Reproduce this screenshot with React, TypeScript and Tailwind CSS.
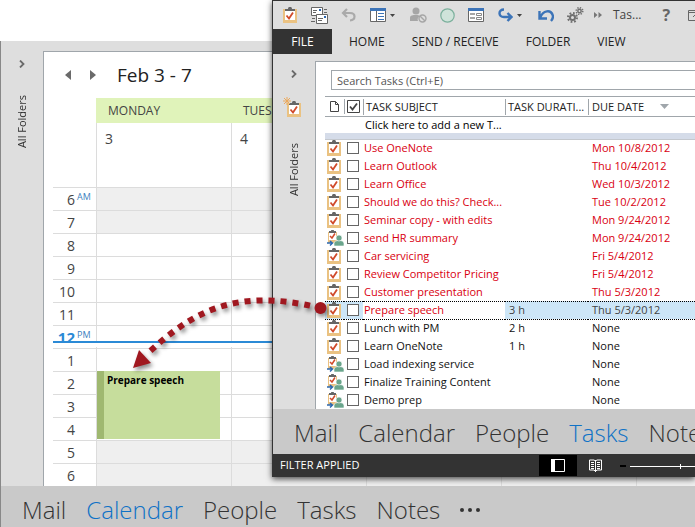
import type { ReactNode } from "react";

type Task = {
  subject: string;
  due: string;
  duration?: string;
  late?: boolean;
  assigned?: boolean;
  selected?: boolean;
};

const tasks: Task[] = [
  { subject: "Use OneNote", due: "Mon 10/8/2012", late: true },
  { subject: "Learn Outlook", due: "Thu 10/4/2012", late: true },
  { subject: "Learn Office", due: "Wed 10/3/2012", late: true },
  { subject: "Should we do this? Check...", due: "Tue 10/2/2012", late: true },
  { subject: "Seminar copy - with edits", due: "Mon 9/24/2012", late: true },
  { subject: "send HR summary", due: "Mon 9/24/2012", late: true, assigned: true },
  { subject: "Car servicing", due: "Fri 5/4/2012", late: true },
  { subject: "Review Competitor Pricing", due: "Fri 5/4/2012", late: true },
  { subject: "Customer presentation", due: "Thu 5/3/2012", late: true },
  { subject: "Prepare speech", due: "Thu 5/3/2012", duration: "3 h", late: true, selected: true },
  { subject: "Lunch with PM", due: "None", duration: "2 h" },
  { subject: "Learn OneNote", due: "None", duration: "1 h" },
  { subject: "Load indexing service", due: "None", assigned: true },
  { subject: "Finalize Training Content", due: "None", assigned: true },
  { subject: "Demo prep", due: "None", assigned: true },
];

const hours = ["6", "7", "8", "9", "10", "11", "12", "1", "2", "3", "4", "5", "6"];
const days = ["MONDAY", "TUESDAY", "WEDNESDAY", "THURSDAY", "FRIDAY"];

function Clipboard() {
  return (
    <svg width="14" height="16" viewBox="0 0 14 16" className="block">
      <path d="M0 2h14v14H0z" fill="#eac282" />
      <path d="M2 2h10v11H2z" fill="#fff" />
      <path d="M2 4V2h3c0-3 4-3 4 0h3v2z" fill="#666" />
      <path d="M3.5 8.5l2.5 3 4-6" fill="none" stroke="#d04a2b" strokeWidth="1.8" />
    </svg>
  );
}

function AssignedClipboard() {
  return (
    <svg width="17" height="16" viewBox="0 0 17 16" className="block">
      <path d="M1 2h9v11H1z" fill="#eac282" />
      <path d="M2 2h7v8H2z" fill="#fff" />
      <path d="M2 3V1h2c0-2 3-2 3 0h2v2z" fill="#666" />
      <path d="M3 6l2 2 3-4.5" fill="none" stroke="#d04a2b" strokeWidth="1.5" />
      <path d="M7 16v-2.500c0-2 2-3 5-3s5 1 5 3V16z" fill="#6aa58c" stroke="#fff" strokeWidth=".6" />
      <circle cx="12" cy="8" r="3" fill="#6aa58c" stroke="#fff" strokeWidth=".6" />
      <path d="M0 13h5M3 11l2.500 2L3 15.500" fill="none" stroke="#2c68b0" strokeWidth="1.4" />
    </svg>
  );
}

function Chevron() {
  return (
    <svg width="6" height="8" viewBox="0 0 6 8">
      <path d="M1 .5L4.500 4 1 7.500" fill="none" stroke="#6a6a6a" strokeWidth="1.8" />
    </svg>
  );
}

function Caret() {
  return (
    <svg width="5" height="3" viewBox="0 0 5 3">
      <path d="M0 0h5L2.500 3z" fill="#444" />
    </svg>
  );
}

function ToolButton({ label, children, menu }: { label: string; children: ReactNode; menu?: boolean }) {
  return (
    <button
      aria-label={label}
      className={menu ? "flex h-5 w-8 shrink-0 items-center gap-1 pl-[3px]" : "flex h-5 w-5 shrink-0 items-center justify-center"}
    >
      {children}
      {menu && <Caret />}
    </button>
  );
}

function QuickAccess() {
  return (
    <div className="flex h-7 items-center gap-[9px] pl-[7px] text-[12px] text-[#444]">
      <ToolButton label="Tasks">
        <Clipboard />
      </ToolButton>
      <ToolButton label="Send/Receive All Folders">
        <svg width="17" height="17" viewBox="0 0 17 17" fill="none" stroke="#666">
          <path d="M.5.500h11v8H.5z" fill="#fff" />
          <path d="M2 3.500h4M2 5.500h3M13 2.500h3M13 5.500h3M1 11.500h3M0 14.500h4" />
          <path d="M8 2h2v2H8z" fill="#2c68b0" stroke="none" />
          <path d="M5.500 7.500h11v9h-11z" fill="#fff" />
          <path d="M7 11.500h5M7 13.500h4" />
          <path d="M13 9h2v2h-2z" fill="#2c68b0" stroke="none" />
        </svg>
      </ToolButton>
      <ToolButton label="Undo">
        <svg width="15" height="14" viewBox="0 0 15 14" fill="none" stroke="#aaa" strokeWidth="2.200">
          <path d="M6 1L2 5l4 4M2 5h7c6 0 6 7 0 7.500" />
        </svg>
      </ToolButton>
      <ToolButton label="Reading pane" menu>
        <svg width="16" height="14" viewBox="0 0 16 14">
          <path d="M.5.500h15v13H.5z" fill="#fff" stroke="#666" />
          <path d="M0 0h16v3H0z" fill="#3c74b8" />
          <path d="M6.500 3v10" stroke="#666" />
          <path d="M8 5.500h6M8 8.500h6M8 11.500h6" stroke="#3c74b8" />
        </svg>
      </ToolButton>
      <ToolButton label="Block sender">
        <svg width="17" height="16" viewBox="0 0 17 16" fill="#a6a6a6">
          <circle cx="6" cy="4" r="3.500" />
          <path d="M0 14v-3c0-3 3-3 6-3 2 0 3 0 4 1-2 1-3 3-2 5z" />
          <circle cx="12.500" cy="11.500" r="3.500" fill="none" stroke="#a6a6a6" strokeWidth="1.400" />
          <path d="M10 9l5 5" stroke="#a6a6a6" strokeWidth="1.400" />
        </svg>
      </ToolButton>
      <ToolButton label="Status">
        <svg width="15" height="15" viewBox="0 0 15 15">
          <circle cx="7.500" cy="7.500" r="6.700" fill="#cfe3da" stroke="#7bb09c" strokeWidth="1.200" />
        </svg>
      </ToolButton>
      <ToolButton label="Form">
        <svg width="16" height="14" viewBox="0 0 16 14">
          <path d="M.5.500h15v13H.5z" fill="#fff" stroke="#666" />
          <path d="M0 0h16v3H0z" fill="#3c74b8" />
          <path d="M2 6h5M2 10h5" stroke="#888" strokeWidth="1.500" />
          <path d="M8.500 5.500h5v2h-5zM8.500 9.500h5v2h-5z" fill="none" stroke="#888" />
        </svg>
      </ToolButton>
      <ToolButton label="Forward" menu>
        <svg width="15" height="14" viewBox="0 0 15 14" fill="none" stroke="#3c74b8" strokeWidth="2.400">
          <path d="M6 1.500C0 1.500 0 9 6 9h7M9.500 5l4 4-4 4" />
        </svg>
      </ToolButton>
      <ToolButton label="Reply">
        <svg width="16" height="13" viewBox="0 0 16 13" fill="none" stroke="#3c74b8" strokeWidth="2.400">
          <path d="M1.500 2v7.500H9M2 9c3-8 11-9 13-2 0 2-1 4-2 5" />
        </svg>
      </ToolButton>
      <ToolButton label="Settings">
        <svg width="17" height="16" viewBox="0 0 17 16" fill="none" stroke="#707070">
          <circle cx="5.500" cy="10.500" r="2.500" strokeWidth="2" />
          <circle cx="5.500" cy="10.500" r="4.500" strokeWidth="2" strokeDasharray="1.760 1.770" />
          <circle cx="12.500" cy="4" r="1.700" strokeWidth="1.500" />
          <circle cx="12.500" cy="4" r="3.300" strokeWidth="1.500" strokeDasharray="1.300 1.290" />
        </svg>
      </ToolButton>
      <svg width="8" height="6" viewBox="0 0 8 6" fill="#777" className="shrink-0">
        <path d="M0 0l3.500 3L0 6zM4.500 0L8 3 4.500 6z" />
      </svg>
      <span className="shrink-0 pl-[2px] text-[12px]">Tas...</span>
      <button className="shrink-0 pl-3 text-[16px] font-bold text-[#666]">?</button>
      <span className="shrink-0 pl-[6px]">
        <ToolButton label="Ribbon display options">
          <svg width="14" height="11" viewBox="0 0 14 11" fill="none" stroke="#666">
            <path d="M.5.500h13v10H.5zM0 2.500h14M5 7l2-2 2 2" />
          </svg>
        </ToolButton>
      </span>
    </div>
  );
}

function Rail({ children }: { children?: ReactNode }) {
  return (
    <aside className="flex w-[42px] shrink-0 flex-col items-center text-[11px] text-[#333]">
      <button aria-label="Expand folder pane" className="mt-2 flex h-[10px] items-center">
        <Chevron />
      </button>
      {children}
      <span className="mt-[26px] rotate-180 whitespace-nowrap [writing-mode:vertical-rl]">All Folders</span>
    </aside>
  );
}

function ModuleNav({ active, className }: { active: string; className: string }) {
  return (
    <nav className={`flex items-center gap-5 overflow-hidden bg-[#c9c9c9] pl-[21px] text-[24px] font-light text-[#333] ${className}`}>
      {["Mail", "Calendar", "People", "Tasks", "Notes"].map((name) => (
        <a key={name} href="#" className={name === active ? "text-[#0f72c6]" : ""}>
          {name}
        </a>
      ))}
      <button aria-label="More" className="flex gap-1">
        <i className="size-1 rounded-full bg-[#333]" />
        <i className="size-1 rounded-full bg-[#333]" />
        <i className="size-1 rounded-full bg-[#333]" />
      </button>
    </nav>
  );
}

function CalendarWindow() {
  return (
    <section className="border-l border-[#888] bg-[#dedede]">
      <div className="flex pt-[10px]">
        <Rail />
        <div className="min-w-0 flex-1 overflow-hidden border-t border-l border-[#a0a6ab] bg-white">
          <header className="flex h-[46px] items-center gap-[19px] pl-[21px]">
            <button aria-label="Previous week">
              <svg width="6" height="10" viewBox="0 0 6 10">
                <path d="M6 0v10L0 5z" fill="#6a6a6a" />
              </svg>
            </button>
            <button aria-label="Next week">
              <svg width="6" height="10" viewBox="0 0 6 10">
                <path d="M0 0v10l6-5z" fill="#6a6a6a" />
              </svg>
            </button>
            <h1 className="pl-[2px] text-[19px] text-[#222]">Feb 3 - 7</h1>
          </header>
          <div className="relative ml-[9px]">
            <div className="flex pl-[43px]">
              {days.map((day, i) => (
                <div key={day} className="w-[135px] shrink-0 text-[#444]">
                  <div className="h-[25px] bg-[#e0f3ba] pl-3 text-[12px] leading-[25px]">{day}</div>
                  <div className="h-16 border-l border-[#dcdcdc] pt-[6px] pl-2 text-[14px] leading-5">{i + 3}</div>
                </div>
              ))}
            </div>
            {hours.map((hour, i) => {
              const off = i < 2 || i > 10;
              const now = i === 6;
              return (
                <div key={i} className="flex h-[23px] border-t border-[#dcdcdc]">
                  <div
                    className={
                      now
                        ? "flex w-[43px] shrink-0 overflow-hidden text-[15px] font-bold text-[#2b8ad6]"
                        : "flex w-[43px] shrink-0 text-[14px] text-[#444]"
                    }
                  >
                    <span className="w-[22px] text-right leading-[23px]">{hour}</span>
                    {(i === 0 || now) && (
                      <sup className="top-0 pt-1 pl-[2px] text-[9px] leading-[10px] font-normal text-[#3d7fc0]">
                        {now ? "PM" : "AM"}
                      </sup>
                    )}
                  </div>
                  {days.map((day) => (
                    <div
                      key={day}
                      className={off ? "w-[135px] shrink-0 border-l border-[#dcdcdc] bg-[#efefef]" : "w-[135px] shrink-0 border-l border-[#dcdcdc]"}
                    />
                  ))}
                </div>
              );
            })}
            <div className="absolute inset-x-0 top-[243px] h-[6px] border-t-2 border-[#2b8ad6] bg-white" />
            <div className="absolute top-[273px] left-[44px] h-[68px] w-[123px] border-l-[7px] border-[#9fb870] bg-[#c6dd9c] pl-[3px] text-[10px] leading-[18px] font-bold text-black">
              Prepare speech
            </div>
          </div>
        </div>
      </div>
      <ModuleNav active="Calendar" className="h-[41px] pt-[6px]" />
    </section>
  );
}

function TaskTable() {
  return (
    <table className="ml-[9px] w-[calc(100%-9px)] table-fixed border-collapse text-left text-[11px] leading-4 whitespace-nowrap">
      <colgroup>
        <col className="w-[19px]" />
        <col className="w-[19px]" />
        <col className="w-[142px]" />
        <col className="w-[83px]" />
        <col />
      </colgroup>
      <thead className="border-y border-[#a0a6ab] text-[#222]">
        <tr className="h-5">
          <th className="p-0" aria-label="Icon">
            <svg width="9" height="11" viewBox="0 0 9 11" className="ml-[5px]" fill="none" stroke="#444">
              <path d="M.5.500h5l3 3v7h-8zM5.500.500v3h3" />
            </svg>
          </th>
          <th className="p-0">
            <div className="border-l border-[#a0a6ab] py-px pl-[2px]">
              <input type="checkbox" aria-label="Complete" defaultChecked className="absolute size-3 appearance-none" />
              <svg width="13" height="13" viewBox="0 0 13 13" className="block" fill="none" stroke="#444">
                <path d="M.5.500h12v12H.5z" fill="#fff" />
                <path d="M3 6.500l2.500 3L10 3.500" strokeWidth="1.800" />
              </svg>
            </div>
          </th>
          <th className="p-0 font-normal">
            <div className="border-l border-[#a0a6ab] pl-[2px]">TASK SUBJECT</div>
          </th>
          <th className="p-0 font-normal">
            <div className="border-l border-[#a0a6ab] pl-[2px]">TASK DURATI...</div>
          </th>
          <th className="p-0 font-normal">
            <div className="flex items-center gap-4 border-l border-[#a0a6ab] pl-[3px]">
              DUE DATE
              <svg width="9" height="5" viewBox="0 0 9 5">
                <path d="M0 0h9L4.500 5z" fill="#a0a6ab" />
              </svg>
            </div>
          </th>
        </tr>
      </thead>
      <tbody>
        <tr className="h-4 text-black">
          <td colSpan={2} className="p-0" />
          <td colSpan={3} className="p-0 pl-[2px]">Click here to add a new T...</td>
        </tr>
        <tr className="h-[6px] border-b border-[#c4c8ce] bg-[#d5dce9]">
          <td colSpan={5} className="p-0" />
        </tr>
        {tasks.map((task) => (
          <tr
            key={task.subject}
            className={
              task.selected
                ? "h-[18px] border-y border-dotted border-black bg-[#cde6f7] text-[#444]"
                : task.late
                  ? "h-[18px] text-[#d90010]"
                  : "h-[18px] text-[#111]"
            }
          >
            <td className="p-0 pl-[2px]">{task.assigned ? <AssignedClipboard /> : <Clipboard />}</td>
            <td className="p-0 pl-[3px]">
              <input
                type="checkbox"
                aria-label={task.subject}
                className="block size-3 appearance-none border border-[#666] bg-white"
              />
            </td>
            <td className={task.selected ? "bg-white p-0 pl-px text-[#d90010]" : "p-0 pl-px"}>{task.subject}</td>
            <td className="p-0 pl-1">{task.duration}</td>
            <td className="p-0 pl-1">{task.due}</td>
          </tr>
        ))}
      </tbody>
    </table>
  );
}

function TasksWindow() {
  return (
    <section className="absolute top-0 right-0 left-[272px] overflow-hidden border-t border-l border-[#333] bg-[#dedede] shadow-[0_2px_6px_rgba(0,0,0,0.7)]">
      <QuickAccess />
      <div className="flex h-[25px] items-center text-[12px] whitespace-nowrap text-[#222]">
        <button className="h-full w-[59px] bg-[#333] text-white">FILE</button>
        <button className="pl-[17px]">HOME</button>
        <button className="pl-[27px]">SEND / RECEIVE</button>
        <button className="pl-[27px]">FOLDER</button>
        <button className="pl-[27px]">VIEW</button>
      </div>
      <div className="flex pt-[7px]">
        <Rail>
          <button aria-label="New task" className="relative mt-[22px]">
            <Clipboard />
            <svg width="8" height="8" viewBox="0 0 8 8" className="absolute -top-1 -left-1" stroke="#eba95c">
              <path d="M4 0v8M0 4h8M1 1l6 6M7 1L1 7" />
            </svg>
          </button>
        </Rail>
        <div className="min-w-0 flex-1 border-t border-l border-[#a0a6ab] bg-white">
          <div className="pt-2 pb-[6px] pl-[15px]">
            <input
              aria-label="Search tasks"
              placeholder="Search Tasks (Ctrl+E)"
              className="block h-5 w-full border border-r-0 border-[#a0a6ab] pl-[5px] text-[11px] placeholder:text-[#555]"
            />
          </div>
          <TaskTable />
        </div>
      </div>
      <ModuleNav active="Tasks" className="h-[45px] pt-[2px]" />
      <footer className="flex h-[23px] items-center bg-[#333] pl-[7px] text-[11px] whitespace-nowrap text-white">
        <span className="w-[259px] shrink-0">FILTER APPLIED</span>
        <button aria-label="Normal view" className="flex h-[21px] w-[38px] shrink-0 items-center justify-center bg-black">
          <svg width="14" height="13" viewBox="0 0 14 13">
            <path d="M.5.500h13v12H.5z" fill="none" stroke="#fff" />
            <path d="M0 0h4v13H0z" fill="#fff" />
          </svg>
        </button>
        <button aria-label="Reading view" className="ml-3 shrink-0">
          <svg width="13" height="14" viewBox="0 0 13 14" fill="none" stroke="#fff">
            <path d="M.5 1v10H5l1.500 1.500L8 11h4.500V1H8L6.500 2 5 1zM6.500 1v12M2 3.500h3M2 5.500h3M2 7.500h3M2 9.500h3M8 3.500h3M8 5.500h3M8 7.500h3M8 9.500h3" />
          </svg>
        </button>
        <button aria-label="Zoom out" className="ml-[18px] h-[2px] w-[6px] shrink-0 bg-black" />
        <svg width="100" height="6" viewBox="0 0 100 6" className="ml-1 shrink-0" stroke="#fff">
          <path d="M0 3.500h100M50.500 1v5" />
        </svg>
      </footer>
    </section>
  );
}

// Dashed connector between the task row and its calendar slot
function Connector() {
  return (
    <svg
      width="240"
      height="90"
      viewBox="110 290 240 90"
      className="pointer-events-none absolute top-[290px] left-[110px] drop-shadow-[2px_3px_2px_rgba(0,0,0,0.45)]"
    >
      <path d="M149 352C190 315 232 286 320 308" fill="none" stroke="#a01820" strokeWidth="6" strokeDasharray="6 6" strokeDashoffset="-2" />
      <path d="M139 350l12 13-18 5z" fill="#a01820" />
      <circle cx="320.500" cy="308" r="6" fill="#a01820" />
    </svg>
  );
}

export default function App() {
  return (
    <main className="relative min-h-screen overflow-hidden bg-white pt-[41px] font-['Open_Sans',sans-serif]">
      <CalendarWindow />
      <TasksWindow />
      <Connector />
    </main>
  );
}
